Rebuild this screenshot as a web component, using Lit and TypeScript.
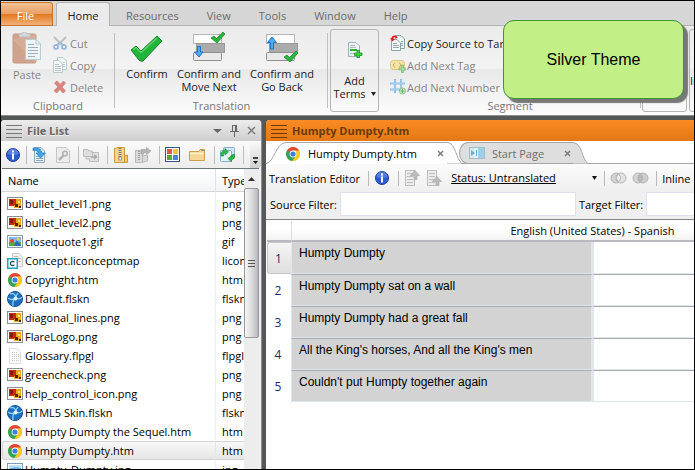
import { LitElement, html, css, svg, nothing } from "lit";
import { customElement } from "lit/decorators.js";
import { classMap } from "lit/directives/class-map.js";

const icon = (w: number, h: number, body: unknown, vb = `0 0 ${w} ${h}`) =>
  html`<svg class="icon" width=${w} height=${h} viewBox=${vb} aria-hidden="true">${body}</svg>`;

const CHECK = "M0 14 L5 10 L10 15 L26 0 L31 5 L12 25 Q10 26 8 24 Z";

const paste = icon(30, 32, svg`
  <rect x="1" y="2" width="23" height="29" rx="1.500" fill="#cfa38c" stroke="#c49a86"/>
  <path d="M1.500 8 L16 2.500 H24 V31 Z" fill="#d9b5a2" opacity=".6"/>
  <path d="M7 5 V2 H10 Q10 0 12.500 0 Q15 0 15 2 H18 V5 Z" fill="#d4d8da" stroke="#b5babd" stroke-width=".7"/>
  <path d="M13.500 7.500 H24 L28.500 12 V27.500 H13.500 Z" fill="#eef4f5" stroke="#b3cdd2"/>
  <path d="M24 7.500 V12 H28.500" fill="none" stroke="#b3cdd2"/>
  <path d="M16 12.500 H22 M16 15.500 H26 M16 18.500 H26 M16 21.500 H26 M16 24.500 H23" stroke="#a5adb0"/>`);

const cut = icon(14, 14, svg`
  <path d="M1 1 L9 9 M13 1 L5 9" stroke="#b9c0c6" stroke-width="2"/>
  <path d="M3 9 L6 7 L8 7 L11 9" fill="none" stroke="#8fb4e0"/>
  <circle cx="3" cy="11" r="2" fill="none" stroke="#8ab0de" stroke-width="1.600"/>
  <circle cx="11" cy="11" r="2" fill="none" stroke="#8ab0de" stroke-width="1.600"/>`);

const copy = icon(14, 16, svg`
  <path d="M4.500 .5 H10 L13.500 4 V12.500 H4.500 Z" fill="#f4f7f7" stroke="#b7c9c8"/>
  <path d="M.5 3.500 H6 L9.500 7 V15.500 H.5 Z" fill="#f4f7f7" stroke="#b7c9c8"/>
  <path d="M2 7.500 H6 M2 9.500 H8 M2 11.500 H8 M2 13.500 H8 M10 5.500 H12 M10 7.500 H12 M10 9.500 H12" stroke="#bcc6c6"/>`);

const del = icon(14, 14, svg`
  <path d="M1.500 3 L4 1 L7 4.500 L10.500 1 L12.500 3 L9 7 L12.500 11 L10 13 L7 9.500 L3.500 13 L1 10.500 L5 7 Z" fill="#db8581" stroke="#cf736f" stroke-width=".7"/>`);

const confirm = icon(34, 28, svg`
  <path d=${CHECK} transform="translate(1 1)" fill="#22b53c" stroke="#148227"/>
  <path d="M3 15 L6 12.500 L11 17.500 L27 3" fill="none" stroke="#5ed36c" stroke-width="1.500"/>`);

const stack = svg`
  <rect x=".5" y="2.500" width="28" height="9" fill="#fdfdfd" stroke="#b5b5b5"/>
  <rect x="3.500" y="11.500" width="28" height="9" fill="#ababab" stroke="#9a9a9a"/>
  <rect x=".5" y="20.500" width="28" height="8" rx="1" fill="#e9e9e9" stroke="#8e8e8e"/>`;

const moveNext = icon(33, 31, svg`${stack}
  <path d="M18 6 L21 4 L23.500 6.500 L30 0 L32 2 L24 11 Z" fill="#25b83c" stroke="#148227" stroke-width=".7"/>
  <path d="M4.500 14.500 H7.500 V20 H10 L6 25 L1.500 20 H4.500 Z" fill="#4dabf2" stroke="#1c74c8"/>`);

const goBack = icon(33, 31, svg`${stack}
  <path d="M4.500 17 V10.500 H1.500 L6 5 L10.500 10.500 H7.500 V17 Z" fill="#4dabf2" stroke="#1c74c8"/>
  <path d="M18 25 L21 23 L23.500 25.500 L30 19 L32 21 L24 30 Z" fill="#25b83c" stroke="#148227" stroke-width=".7"/>`);

const addTerms = icon(16, 16, svg`
  <path d="M1.500 .5 H9 L12.500 4 V14.500 H1.500 Z" fill="#eef3f4" stroke="#9cb1b6"/>
  <path d="M3 3.500 H8 M3 5.500 H9 M3 11.500 H8" stroke="#aeb9bb"/>
  <rect x="3" y="7" width="7" height="2" fill="#2bb532"/>
  <path d="M10 8.500 H12.500 V11 H15 V13.500 H12.500 V16 H10 V13.500 H7.500 V11 H10 Z" fill="#39cf3d" stroke="#17871d" stroke-width=".7"/>`);

const copySource = icon(16, 16, svg`
  <path d="M5.500 .5 H11 L14.500 4 V13.500 H5.500 Z" fill="#eef4f5" stroke="#8ea4a8"/>
  <path d="M1.500 4.500 H7 L10.500 8 V15.500 H1.500 Z" fill="#f4f8f8" stroke="#8ea4a8"/>
  <path d="M3 8.500 H7 M3 10.500 H9 M3 12.500 H9 M11 6.500 H13 M11 8.500 H13 M11 10.500 H13" stroke="#98a5a8"/>
  <path d="M7 3 Q5 0 2.500 2.500 V4" fill="none" stroke="#e01a1f" stroke-width="1.800"/>
  <path d="M0 3 L5 4 L2.500 6.500 Z" fill="#e01a1f"/>`);

const plusBadge = svg`<path d="M11.500 8 H13.500 V11 H16 V13 H13.500 V15.500 H11.500 V13 H9 V11 H11.500 Z" fill="#a5dca0" stroke="#6dbb6c" stroke-width=".7"/>`;

const addTag = icon(16, 16, svg`
  <rect x=".5" y="3.500" width="14" height="9" rx="3" fill="#f6e5a4" stroke="#dcc57f"/>
  <path d="M5 5.500 L3 8 L5 10.500 M9 5.500 L11 8 L9 10.500" fill="none" stroke="#bfa96a"/>${plusBadge}`);

const addNumber = icon(16, 16, svg`
  <path d="M5 0 V14 M11 0 V14 M0 4.500 H15 M0 10.500 H15" stroke="#86bcea" stroke-width="2"/>
  <path d="M5 1 V13 M11 1 V13 M1 4.500 H14 M1 10.500 H14" stroke="#b5daf5" stroke-width=".6"/>
  <circle cx="12.500" cy="12" r="3" fill="#dff0df" stroke="#7fc47f"/>
  <path d="M12.500 10 V14 M10.500 12 H14.500" stroke="#5fb35f"/>`);

const grip = (c: string) => icon(16, 14, svg`<path d="M0 1.500 H16 M0 5.500 H16 M0 9.500 H16 M0 13.500 H16" stroke=${c}/>`);

const info = icon(14, 14, svg`
  <circle cx="7" cy="7" r="6.500" fill="#2c5bd0" stroke="#1c3f9e"/>
  <path d="M1.500 6 A5.500 5.500 0 0 1 12.500 6 Q7 8 1.500 6 Z" fill="#6f95ea" opacity=".6"/>
  <rect x="6" y="2.500" width="2" height="2" fill="#fff"/><rect x="6" y="5.500" width="2" height="6" fill="#fff"/>`);

const openDoc = icon(15, 16, svg`
  <path d="M2.500 .5 H9 L12.500 4 V15.500 H2.500 Z" fill="#e9f2f8" stroke="#8fa9bb"/>
  <path d="M4 9.500 H10 M4 11.500 H11 M4 13.500 H11" stroke="#8fa5b3"/>
  <path d="M1 1 Q9 0 10 6 H13.500 L8.500 11 L4 6 H6.500 Q6 3 1 3.500 Z" fill="#42a5e8" stroke="#1f7cc0" stroke-width=".7"/>`);

const wrench = icon(14, 16, svg`
  <path d="M.5 .5 H10 L13.500 4 V15.500 H.5 Z" fill="#ececec" stroke="#c4c4c4"/>
  <path d="M3 13 L8 8" stroke="#b4b4b4" stroke-width="2.500"/><circle cx="9" cy="6.500" r="2.300" fill="none" stroke="#b4b4b4" stroke-width="1.600"/>`);

const moveFolder = icon(17, 14, svg`
  <path d="M.5 1.500 H5 L6 3 H9.500 V8.500 H.5 Z M8.500 4.500 H15.500 V13.500 H6.500 V11 H3 V8" fill="#dedede" stroke="#bdbdbd"/>
  <path d="M8 9 H13 M11 7 L13.500 9 L11 11" fill="none" stroke="#a8a8a8" stroke-width="1.300"/>`);

const zipFolder = icon(14, 16, svg`
  <path d="M.5 1.500 L4 .5 H10.500 V15.500 H.5 Z" fill="#f3d488" stroke="#c99c42"/>
  <path d="M10.500 9 L13.500 8 V15.500 H10.500 Z" fill="#efc566" stroke="#c99c42"/>
  <path d="M6 1 V13" stroke="#7c7c7c" stroke-width="3" stroke-dasharray="1 1"/><rect x="5" y="10" width="2.500" height="3" fill="#eee" stroke="#777" stroke-width=".6"/>`);

const exportFolder = icon(17, 16, svg`
  <path d="M.5 3.500 H7.500 V15.500 H.5 Z M7.500 9 L12.500 8 V14 L7.500 15.500 Z" fill="#d9d9d9" stroke="#b9b9b9"/>
  <path d="M4 4 V13" stroke="#a0a0a0" stroke-width="2" stroke-dasharray="1 1"/>
  <path d="M6 7 V2.500 H11.500 V.5 L16 4 L11.500 7.500 V5.500 H9 V7 Z" fill="#b5b5b5" stroke="#a5a5a5" stroke-width=".7"/>`);

const tiles = icon(15, 15, svg`
  <rect x=".5" y=".5" width="14" height="14" fill="#fff" stroke="#34538c"/>
  <rect x="2" y="2" width="5" height="5" fill="#e0574a"/><rect x="8" y="2" width="5" height="5" fill="#f2c230"/>
  <rect x="2" y="8" width="5" height="5" fill="#57a545"/><rect x="8" y="8" width="5" height="5" fill="#4a82dc"/>`);

const folder = icon(17, 12, svg`
  <path d="M.5 2.500 H10 L11 .5 H15.500 V11.500 H.5 Z" fill="#f5d896" stroke="#c9a052"/>
  <path d="M1 4.500 H15" stroke="#fbeec5" stroke-width="1.500"/><path d="M12 1.500 H15" stroke="#4aa0dc"/>`);

const refresh = icon(17, 16, svg`
  <rect x="4.500" y=".5" width="11" height="11" rx="1" fill="#d4e6f5" stroke="#86aed0"/>
  <rect x="1.500" y="3.500" width="11" height="11" rx="1" fill="#e4f0fa" stroke="#86aed0"/>
  <path d="M2 9 Q1 4 6 3.500 V1.500 L9.500 5 L6 8 V6 Q4 6 4.500 9 Z" fill="#2dbb45" stroke="#158a2c" stroke-width=".6"/>
  <path d="M15 7 Q17 11 12.500 13 V15 L9 11.500 L12.500 8.500 V10.500 Q13.500 10 13 8 Z" fill="#2dbb45" stroke="#158a2c" stroke-width=".6"/>`);

const importRow = (down: boolean) => icon(16, 16, svg`
  <rect x="1.500" y=".5" width="9" height="15" fill="#ececec" stroke="#bdbdbd"/>
  <path d="M3 3.500 H9 M3 6.500 H9 M3 9.500 H9 M3 12.500 H9" stroke="#bdbdbd"/>
  <path d=${down ? "M10 15.500 V11.500 H6.500 L11 6.500 L15.500 11.500 H13 V15.500 Z" : "M10 9.500 V5.500 H6.500 L11 .5 L15.500 5.500 H13 V9.500 Z"} fill="#bcbcbc" stroke="#a9a9a9" stroke-width=".7"/>`);

const rings = (right: boolean) => icon(17, 12, svg`
  <circle cx="6" cy="6" r="5" fill="#d3d3d3" stroke="#b3b3b3"/><circle cx="11" cy="6" r="5" fill=${right ? "#cdcdcd" : "#e2e2e2"} stroke="#b3b3b3"/>
  <path d="M8.500 2 Q4.500 6 8.500 10 Q12.500 6 8.500 2 Z" fill=${right ? "#bbb" : "#f6f6f6"} stroke="#a8a8a8" stroke-width=".8"/>`);

const chrome = icon(14, 14, svg`
  <circle cx="7" cy="7" r="7" fill="#fbc825"/>
  <path d="M7 7 L.94 3.500 A7 7 0 0 1 13.060 3.500 Z" fill="#df4838"/>
  <path d="M.94 3.500 A7 7 0 0 0 6.500 14 L10 8.500 L7 7 Z" fill="#2fa457"/>
  <path d="M7 3.500 H13.060 A7 7 0 0 1 6.500 14 L10 8.700 Z" fill="#fbc825"/>
  <path d="M.94 3.500 L3.900 8.600 L7 7 Z" fill="#2fa457"/>
  <circle cx="7" cy="7" r="3.400" fill="#fff"/><circle cx="7" cy="7" r="2.600" fill="#3f7ee8"/>`);

const image = icon(16, 13, svg`
  <rect x=".5" y=".5" width="15" height="12" fill="#fbfbf6" stroke="#8f8f8f"/>
  <rect x="2" y="2" width="7" height="7" fill="#c22c12"/><rect x="3" y="3" width="3" height="4" fill="#8e1207"/>
  <path d="M9 2 H14 V11 H7 V8 H9 Z" fill="#f0a41c"/><rect x="8" y="7" width="3" height="3" fill="#512908"/><rect x="11" y="4" width="2" height="2" fill="#ffe58a"/><rect x="12" y="9" width="2" height="2" fill="#3e2408"/>`);

const gif = icon(16, 13, svg`
  <rect x=".5" y=".5" width="15" height="12" fill="#fff" stroke="#8f9aa3"/>
  <rect x="2" y="2" width="12" height="5" fill="#7fb8f0"/><rect x="2" y="7" width="12" height="4" fill="#55a83e"/>
  <circle cx="5" cy="6" r="2" fill="#e2482d"/><path d="M7 11 L10 5 L14 11 Z" fill="#2d68c0"/><circle cx="11" cy="4" r="1.500" fill="#f6cf3a"/>`);

const jpg = icon(16, 13, svg`
  <rect x=".5" y=".5" width="15" height="12" fill="#fff" stroke="#7d9db3"/>
  <rect x="2" y="2" width="12" height="9" fill="#5db0ea"/><path d="M2 6 Q6 3 14 5 V2 H2 Z" fill="#bfe2f8"/>`);

const concept = icon(16, 16, svg`
  <path d="M5.500 .5 H12 L15.500 4 V13.500 H5.500 Z" fill="#f3f3f3" stroke="#c9c9c9"/>
  <path d="M7 3.500 H11 M7 5.500 H14 M11 8.500 H14" stroke="#b4b4b4"/>
  <rect x=".75" y="5.750" width="9.500" height="9.500" fill="#fff" stroke="#1aa5c4" stroke-width="1.500"/>
  <path d="M7.500 9 Q3.500 7.500 3.500 10.500 Q3.500 13.500 7.500 12" fill="none" stroke="#25525e" stroke-width="1.300"/>`);

const skin = icon(16, 16, svg`
  <circle cx="8" cy="8" r="7.500" fill="#1e6fc0" stroke="#164f91"/>
  <path d="M3 3 Q8 1 9 7 Q13 9 15 6 M9 7 Q5 9 6 15 M1 7 Q5 10 9 7 M11 2 Q9 4 9 7" fill="none" stroke="#8fd0fb" stroke-width="1.300"/>
  <circle cx="8.500" cy="7.500" r="2" fill="#e4f5ff"/>`);

const glossary = icon(14, 16, svg`
  <path d="M1.500 .5 H9 L12.500 4 V15.500 H1.500 Z" fill="#fdfdfd" stroke="#b9b9b9" stroke-dasharray="1 1"/>
  <path d="M4 4.500 H9 M4 6.500 H11 M4 8.500 H11 M4 10.500 H11 M4 12.500 H11" stroke="#c2c2c2" stroke-dasharray="1 1"/>`);

const startPage = icon(16, 12, svg`
  <rect x=".5" y=".5" width="15" height="11" fill="#e8f2f7" stroke="#a3bccb"/>
  <rect x="1" y="1" width="4" height="10" fill="#d5e8f2"/><rect x="9" y="1" width="6" height="10" fill="#9dcfe9"/><path d="M2 3 L6 6 L2 9 Z" fill="#6db0d6"/><path d="M7.500 3 V9" stroke="#6db0d6"/>`);

const pin = icon(9, 12, svg`<path d="M2.500 0 V6 M6.500 0 V6 M5.500 0 V6 M2 .5 H7 M0 6.500 H9 M4.500 7 V12" fill="none" stroke="#666"/>`);
const cross = (c: string, s: number) => icon(s, s, svg`<path d="M1 1 L${s - 1} ${s - 1} M${s - 1} 1 L1 ${s - 1}" stroke=${c} stroke-width="1.400"/>`);
const caret = (c: string, w: number) => icon(w, 4, svg`<path d=${`M0 0 H${w} L${w / 2} 4 Z`} fill=${c}/>`);

const FILES: [string, string, unknown][] = [
  ["bullet_level1.png", "png", image],
  ["bullet_level2.png", "png", image],
  ["closequote1.gif", "gif", gif],
  ["Concept.liconceptmap", "liconceptmap", concept],
  ["Copyright.htm", "htm", chrome],
  ["Default.flskn", "flskn", skin],
  ["diagonal_lines.png", "png", image],
  ["FlareLogo.png", "png", image],
  ["Glossary.flpgl", "flpgl", glossary],
  ["greencheck.png", "png", image],
  ["help_control_icon.png", "png", image],
  ["HTML5 Skin.flskn", "flskn", skin],
  ["Humpty Dumpty the Sequel.htm", "htm", chrome],
  ["Humpty Dumpty.htm", "htm", chrome],
  ["Humpty_Dumpty.jpg", "jpg", jpg],
];

const SEGMENTS = [
  "Humpty Dumpty",
  "Humpty Dumpty sat on a wall",
  "Humpty Dumpty had a great fall",
  "All the King's horses, And all the King's men",
  "Couldn't put Humpty together again",
];

const base = css`
  * { box-sizing: border-box; }
  button, input, select { font: inherit; color: inherit; margin: 0; padding: 0; border: 0; background: none; border-radius: 0; }
  button { display: flex; align-items: center; justify-content: center; flex: none; white-space: nowrap; }
  .icon { display: block; flex: none; }
`;

@customElement("ribbon-bar")
class RibbonBar extends LitElement {
  static styles = [base, css`
    :host { display: block; flex: none; position: relative; color: #222; }
    .tabs { display: flex; height: 25px; padding-top: 1px; background: #d6d6d6; border-bottom: 1px solid #b3b3b3; color: #6b6b6b; }
    .tab { height: 24px; padding: 2px 0 0; margin-right: 28px; }
    .file { width: 52px; margin-right: 3px; padding-right: 2px; color: #fff; border: 1px solid #c9742a; border-left: 0; border-radius: 0 3px 0 0;
      background: linear-gradient(#f3c196, #e9a064 48%, #df7a22 52%, #f3b27a); }
    .home { width: 54px; margin-right: 16px; color: #222; background: #ebebeb; border: 1px solid #b3b3b3; border-bottom: 0; border-radius: 3px 3px 0 0; }
    .body { display: flex; height: 90px; padding-top: 3px; overflow: hidden; border-bottom: 1px solid #8c8c8c;
      background: linear-gradient(#ebebeb, #f3f3f3 48%, #e8e8e8 49%, #fcfcfc); }
    .group { flex: none; display: flex; flex-direction: column; position: relative; padding: 3px 0 1px; }
    .group::after { content: ""; position: absolute; right: 0; top: 4px; bottom: 7px; width: 1px; background: #c0c0c0; }
    .items { display: flex; flex: 1; }
    .label { text-align: center; line-height: 16px; color: #777; }
    .clip { width: 114px; }
    .trans { width: 213px; }
    .seg { width: 262px; }
    .big { flex-direction: column; justify-content: flex-start; line-height: 13px; }
    .big .icon { margin-bottom: 4px; }
    .dim { color: #858585; }
    .paste { width: 52px; }
    .w64 { width: 64px; } .w60 { width: 60px; } .w84 { width: 86px; }
    .confirm { padding-top: 3px; }
    .col { display: flex; flex-direction: column; }
    .small { height: 22px; justify-content: flex-start; gap: 3px; }
    .seg .small { gap: 1px; }
    .seg .col { padding-left: 11px; }
    .boxed { width: 49px; margin: 0 0 3px 2px; border: 1px solid #b5b5b5; border-radius: 3px; padding-top: 12px; }
    .boxed .icon { margin-bottom: 16px; }
    .terms { display: flex; align-items: center; gap: 5px; }
    .boxed .terms .icon { margin: 0; }
    .empty { width: 45px; padding: 0; margin-left: 1px; }
    .next { padding: 44px 0 0; align-items: flex-start; margin-left: 2px; }
  `];

  small(i: unknown, text: string, dim = true) {
    return html`<button class=${classMap({ small: true, dim })}>${i}${text}</button>`;
  }

  render() {
    return html`
      <nav class="tabs">
        <button class="tab file">File</button>
        <button class="tab home">Home</button>
        ${["Resources", "View", "Tools", "Window", "Help"].map((t) => html`<button class="tab">${t}</button>`)}
      </nav>
      <div class="body">
        <section class="group clip">
          <div class="items">
            <button class="big dim paste">${paste}Paste</button>
            <div class="col">${this.small(cut, "Cut")}${this.small(copy, "Copy")}${this.small(del, "Delete")}</div>
          </div>
          <div class="label">Clipboard</div>
        </section>
        <section class="group trans">
          <div class="items">
            <button class="big confirm w64">${confirm}Confirm</button>
            <button class="big w60">${moveNext}<span>Confirm and<br>Move Next</span></button>
            <button class="big w84">${goBack}<span>Confirm and<br>Go Back</span></button>
          </div>
          <div class="label">Translation</div>
        </section>
        <button class="big boxed">${addTerms}<span>Add</span><span class="terms">Terms ${caret("#222", 5)}</span></button>
        <section class="group seg">
          <div class="items">
            <div class="col">
              ${this.small(copySource, "Copy Source to Target", false)}
              ${this.small(addTag, "Add Next Tag")}
              ${this.small(addNumber, "Add Next Number")}
            </div>
          </div>
          <div class="label">Segment</div>
        </section>
        <button class="big boxed empty" aria-label="Segment options"></button>
        <button class="big boxed next">Insert</button>
      </div>`;
  }
}

@customElement("file-list")
class FileList extends LitElement {
  static styles = [base, css`
    :host { display: flex; flex-direction: column; flex: none; width: 261px; overflow: hidden; background: #f0f0f0; border-radius: 4px 4px 0 0; border-right: 1px solid #8d9097; }
    .title { flex: none; display: flex; align-items: center; height: 21px; padding: 0 5px; gap: 5px; color: #666; font-weight: bold; background: linear-gradient(#ececec, #cecece); }
    .title h2 { flex: 1; margin: 0; font-size: inherit; text-shadow: 0 1px #f5f5f5; }
    .title .btns { display: flex; gap: 8px; align-items: center; }
    .tools { flex: none; display: flex; align-items: center; height: 27px; padding-left: 2px; background: linear-gradient(#fafafa, #ececec); }
    .tools button { width: 23px; height: 23px; }
    .tools .first { width: 19px; }
    .tools .wide { width: 26px; }
    .sep { width: 1px; height: 18px; background: #bdbdbd; margin: 0 1px 0 4px; }
    .tools .more { width: 11px; height: 27px; margin-left: auto; align-items: flex-end; padding-bottom: 4px; border-radius: 0 0 4px 0; background: linear-gradient(#fbfbfb, #cfcfcf); }
    .list { flex: 1; min-height: 0; display: flex; margin: 0 2px 0 1px; border-top: 1px solid #70747c; background: #fff; }
    .scroll { flex: 1; min-width: 0; overflow: hidden; }
    table { border-collapse: separate; border-spacing: 0; table-layout: fixed; width: 100%; color: #000; }
    th { height: 23px; padding: 1px 6px; text-align: left; font-weight: normal; border-bottom: 1px solid #d5d5d5; background: linear-gradient(#fff, #f3f4f5); }
    th + th { border-left: 1px solid #e0e3e6; }
    .typecol { width: 29px; }
    td { height: 19px; padding: 0 0 0 6px; line-height: 17px; white-space: nowrap; overflow: hidden; border: solid transparent; border-width: 1px 0; }
    td:first-child { padding-left: 4px; border-left-width: 1px; }
    td + td { border-left: 1px solid #e6eff5; }
    .gap td { height: 2px; line-height: 0; border-width: 0; padding: 0; }
    .gap td + td { border-left-width: 1px; }
    .sel td { background: linear-gradient(#f8f8f8, #e5e5e5); border-color: #d4d4d4; }
    .sel td:first-child { border-radius: 3px 0 0 3px; }
    .sel td + td { border-left-color: #e3e6e8; }
    .name { display: flex; align-items: center; gap: 2px; }
    .slot { width: 16px; display: flex; justify-content: center; flex: none; }
    .bar { flex: none; width: 15px; display: flex; flex-direction: column; background: #ededed; }
    .bar .up { width: 15px; height: 19px; }
    .thumb { height: 150px; border: 1px solid #979797; border-radius: 2px; background: linear-gradient(90deg, #f7f7f7, #dcdcdf 50%, #b9b9bd); display: flex; align-items: center; justify-content: center; }
  `];

  render() {
    const b = (i: unknown, label: string, cls = "") => html`<button class=${cls} aria-label=${label}>${i}</button>`;
    const sep = html`<span class="sep"></span>`;
    return html`
      <header class="title">
        ${grip("#777")}<h2>File List</h2>
        <div class="btns">${b(caret("#666", 9), "Menu")}${b(pin, "Pin")}${b(cross("#777", 9), "Close")}</div>
      </header>
      <div class="tools">
        ${b(info, "Info", "first")}${sep}
        ${b(openDoc, "Open")}${b(wrench, "Properties")}${sep}
        ${b(moveFolder, "Move")}${sep}
        ${b(zipFolder, "Zip")}${b(exportFolder, "Export")}${sep}
        ${b(tiles, "Views")}${b(folder, "Folder", "wide")}${sep}
        ${b(refresh, "Refresh")}${sep}
        ${b(icon(5, 7, svg`<path d="M0 1 H5" stroke="#111" stroke-width="1.500"/><path d="M0 4 H5 L2.500 7 Z" fill="#111"/>`), "More", "more")}
      </div>
      <div class="list">
        <div class="scroll">
          <table>
            <colgroup><col><col class="typecol"></colgroup>
            <thead><tr><th>Name</th><th>Type</th></tr></thead>
            <tbody>
              <tr class="gap" aria-hidden="true"><td></td><td></td></tr>
              ${FILES.map(([name, type, i], n) => html`
                <tr class=${n === 13 ? "sel" : nothing}>
                  <td><div class="name"><span class="slot">${i}</span>${name}</div></td><td>${type}</td>
                </tr>`)}
            </tbody>
          </table>
        </div>
        <div class="bar">
          ${b(icon(7, 4, svg`<path d="M0 4 L3.500 0 L7 4 Z" fill="#333"/>`), "Scroll up", "up")}
          <div class="thumb">${icon(7, 9, svg`<path d="M0 1.500 H7 M0 4.500 H7 M0 7.500 H7" stroke="#555"/>`)}</div>
        </div>
      </div>`;
  }
}

@customElement("translation-editor")
class TranslationEditor extends LitElement {
  static styles = [base, css`
    :host { display: flex; flex-direction: column; flex: 1; min-width: 0; overflow: hidden; background: #fff; color: #000; border-radius: 4px 0 0 0; }
    .title { flex: none; display: flex; align-items: center; height: 21px; padding: 0 5px; gap: 5px; color: #6b3a0c; font-weight: bold; background: linear-gradient(#fb8b24, #e37814); }
    .title h2 { margin: 0; font-size: inherit; }
    .tabs { flex: none; display: flex; height: 23px; padding-top: 1px; overflow: hidden; background: linear-gradient(#a3a5a7, #a3a5a7) bottom / 100% 1px no-repeat; }
    .tab { display: flex; flex: none; height: 22px; }
    .tab:first-child { position: relative; z-index: 1; }
    .tab + .tab { margin-left: -3px; color: #6d6d6d; }
    .face { display: flex; align-items: center; height: 22px; gap: 8px; border-top: 1px solid #a3a5a7; background: #fff; }
    .off .face { gap: 7px; padding-left: 9px; border-left: 1px solid #a3a5a7; border-radius: 9px 0 0 9px / 11px 0 0 11px; background: #dedede; border-bottom: 1px solid #a3a5a7; }
    .face .close { width: 12px; height: 16px; margin-left: 10px; }
    .edge { display: block; flex: none; }
    .tools { flex: none; display: flex; align-items: center; height: 28px; padding: 0 3px; overflow: hidden; white-space: nowrap; background: linear-gradient(#fbfbfb, #efefef); }
    .tools > span { flex: none; }
    .tools button { width: 22px; height: 20px; }
    .caption { margin-right: 3px; }
    .inline { margin-left: 3px; }
    .sep { width: 1px; height: 15px; margin: 0 2px 0 5px; background: #b8b8b8; }
    .status { position: relative; display: flex; align-items: center; flex: none; width: 148px; margin-left: 6px; }
    select { width: 148px; appearance: none; text-decoration: underline; line-height: 16px; }
    .status .icon { position: absolute; right: 2px; pointer-events: none; }
    .filters { flex: none; display: flex; align-items: center; height: 28px; padding: 0 0 3px 4px; gap: 3px; background: #efefef; border-bottom: 1px solid #858391; overflow: hidden; }
    .filters label { flex: none; }
    .filters input { flex: none; width: 236px; height: 24px; background: #fff; border: 1px solid #dfe2ec; padding: 0 4px; }
    .grid { flex: 1; min-height: 0; overflow: hidden; padding: 1px 0 0 1px; }
    table { border-collapse: separate; border-spacing: 0; table-layout: fixed; width: 626px; }
    .num { width: 24px; } .src { width: 302px; }
    th { font-weight: normal; padding: 0; }
    thead th { height: 21px; border-bottom: 2px solid #b9b9bd; background: linear-gradient(#fff 40%, #f3f3f4); }
    thead th + th { border-left: 1px solid #dcdcdc; }
    tbody th { height: 32px; padding-right: 2px; color: #1c2c66; font-size: 12px; }
    tbody tr:first-child th { background: linear-gradient(#f5f5f5, #dedede); border: 1px solid #c6c6c6; border-right: 0; border-radius: 3px 0 0 3px; }
    td { height: 32px; padding: 3px 7px; vertical-align: top; font: 12px/16px "Liberation Sans", Arial, sans-serif; border-bottom: 1px solid #e1e5ec; border-left: 1px solid #e1e5ec; }
    tr + tr td { border-top: 1px solid #aaaaaf; }
    .source { background: #d3d3d3; border-right: 2px solid #e1e5ec; }
  `];

  edge(left: boolean, on: boolean) {
    const d = left ? "M0 21.500 C8 21 10 .5 20 .5" : "M0 .5 C9 .5 9 18 15 21.500";
    const w = left ? 20 : 15;
    return html`<svg class="edge" width=${w} height="22" aria-hidden="true">
      <path d=${d + (left ? " V22 H0 Z" : " H0 Z")} fill=${on ? "#fff" : "#dedede"}/>
      <path d=${d} fill="none" stroke="#a3a5a7"/>
    </svg>`;
  }

  render() {
    const b = (i: unknown, label: string, cls = "") => html`<button class=${cls} aria-label=${label}>${i}</button>`;
    const sep = html`<span class="sep"></span>`;
    return html`
      <header class="title">${grip("#6b3a0c")}<h2>Humpty Dumpty.htm</h2></header>
      <div class="tabs">
        <div class="tab">${this.edge(true, true)}<div class="face">${chrome}<span>Humpty Dumpty.htm</span>${b(cross("#777", 7), "Close", "close")}</div>${this.edge(false, true)}</div>
        <div class="tab off"><div class="face">${startPage}<span>Start Page</span>${b(cross("#777", 7), "Close", "close")}</div>${this.edge(false, false)}</div>
      </div>
      <div class="tools">
        <span class="caption">Translation Editor</span>${sep}${b(info, "Info")}${sep}${b(importRow(false), "Previous")}${b(importRow(true), "Next")}
        <div class="status"><select aria-label="Status"><option>Status: Untranslated</option></select>${caret("#111", 5)}</div>
        ${sep}${b(rings(false), "Merge")}${b(rings(true), "Split")}${sep}<span class="inline">Inline</span>
      </div>
      <div class="filters">
        <label for="source">Source Filter:</label><input id="source" type="text">
        <label for="target">Target Filter:</label><input id="target" type="text">
      </div>
      <div class="grid">
        <table>
          <colgroup><col class="num"><col class="src"><col></colgroup>
          <thead><tr><th></th><th colspan="2">English (United States) - Spanish</th></tr></thead>
          <tbody>${SEGMENTS.map((s, i) => html`<tr><th scope="row">${i + 1}</th><td class="source">${s}</td><td></td></tr>`)}</tbody>
        </table>
      </div>`;
  }
}

@customElement("app-root")
class AppRoot extends LitElement {
  static styles = [base, css`
    :host { display: flex; flex-direction: column; position: relative; box-sizing: border-box; height: 100vh; overflow: hidden; border: 1px solid #000; background: #565857; font: 11px "Open Sans", "Noto Sans", sans-serif; }
    .work { display: flex; flex: 1; min-height: 0; gap: 4px; padding-top: 4px; }
    .callout { position: absolute; top: 19px; right: 10px; width: 181px; height: 79px; display: flex; align-items: center; justify-content: center; font: 16px "Liberation Sans", Arial, sans-serif; color: #000;
      background: #c3ef87; border: 1px solid #3f9436; border-radius: 11px; box-shadow: 4px 4px 1px #777; }
  `];

  render() {
    return html`
      <ribbon-bar></ribbon-bar>
      <main class="work"><file-list></file-list><translation-editor></translation-editor></main>
      <aside class="callout">Silver Theme</aside>`;
  }
}
